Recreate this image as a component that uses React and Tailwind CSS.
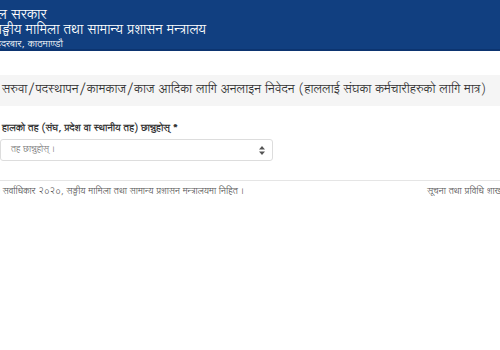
import React from 'react';

const font = { fontFamily: '"Lohit Devanagari", "FreeSans", "Noto Sans Devanagari", "Noto Sans", "Liberation Sans", sans-serif' };

const App = () => {
  return (
    <div className="w-[500px] h-[350px] overflow-hidden bg-white" style={font}>
      {/* Header band */}
      <div className="h-[51px] bg-[#113f80] border-b-2 border-[#0c3470] text-white overflow-hidden pt-[8px] leading-none">
        <div className="ml-[-22px] text-[14px] whitespace-nowrap h-[14px] leading-[14px]">नेपाल सरकार</div>
        <div className="ml-[-7px] text-[13px] whitespace-nowrap h-[15px] leading-[15px] mt-[1px]">सङ्घीय मामिला तथा सामान्य प्रशासन मन्त्रालय</div>
        <div className="ml-[-13px] text-[9.5px] whitespace-nowrap leading-[10px] mt-[2px]">सिंहदरबार, काठमाण्डौ</div>
      </div>

      {/* Page title */}
      <div className="mt-[24px] h-[31px] bg-[#f5f5f5] flex items-center pl-[2px]">
        <h1 className="text-[12.1px] font-semibold text-[#333] whitespace-nowrap">
          सरुवा/पदस्थापन/कामकाज/काज आदिका लागि अनलाइन निवेदन (हाललाई संघका कर्मचारीहरुको लागि मात्र)
        </h1>
      </div>

      {/* Form */}
      <div className="mt-[16px] pl-[2px]">
        <label className="block h-[14px] leading-[14px] text-[9.4px] font-bold text-[#333] whitespace-nowrap">
          हालको तह (संघ, प्रदेश वा स्थानीय तह) छान्नुहोस् <span>*</span>
        </label>
        <div className="mt-[3px] ml-[-2px] w-[273px] h-[22px] border border-[#ddd] rounded-[3px] flex items-center justify-between pl-[10px] pr-[7px] bg-white">
          <span className="text-[8.5px] text-[#777]">तह छान्नुहोस् ।</span>
          <svg width="6" height="9" viewBox="0 0 6 9">
            <path d="M3 0 L6 3.5 L0 3.5 Z M3 9 L6 5.5 L0 5.5 Z" fill="#555" />
          </svg>
        </div>
      </div>

      {/* Footer */}
      <div className="mt-[19px] border-t border-[#e5e5e5] pt-[3px] flex justify-between text-[8.7px] leading-[14px] text-[#555] whitespace-nowrap">
        <span className="ml-[-7px]">© सर्वाधिकार २०२०, सङ्घीय मामिला तथा सामान्य प्रशासन मन्त्रालयमा निहित ।</span>
        <span className="mr-[-4px]">सूचना तथा प्रविधि शाखा</span>
      </div>
    </div>
  );
};

export default App;
